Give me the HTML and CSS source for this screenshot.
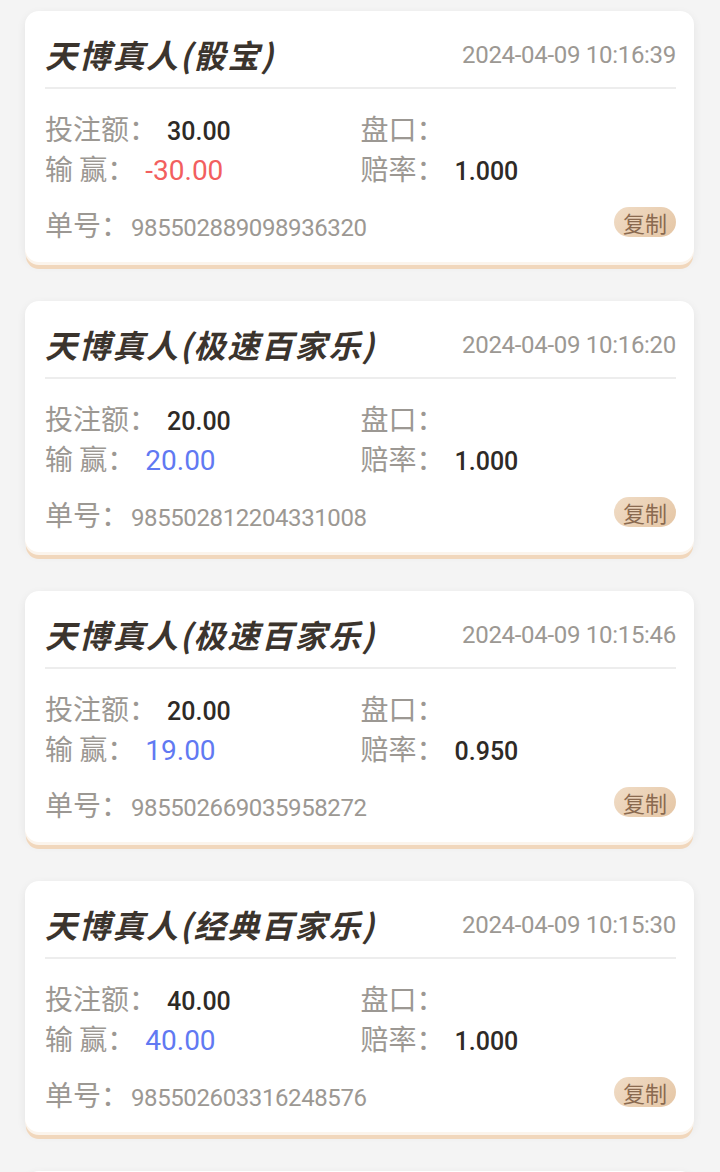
FILE: index.html
```html
<!DOCTYPE html>
<html lang="zh-CN">
<head>
    <meta charset="UTF-8">
    <meta name="viewport" content="width=device-width, initial-scale=1.0">
    <title>投注记录</title>
    <link rel="stylesheet" href="styles.css">
</head>
<body>
    <div class="lista">

        <div class="card">
            <div class="head">
                <p class="titulo">天博真人(骰宝)</p>
                <p class="fecha">2024-04-09 10:16:39</p>
            </div>
            <div class="datos">
                <p><span class="label">投注额：</span><span class="valor">30.00</span></p>
                <p><span class="label">盘口：</span></p>
                <p><span class="label">输 赢：</span><span class="gana rojo">-30.00</span></p>
                <p><span class="label">赔率：</span><span class="valor">1.000</span></p>
            </div>
            <div class="pie">
                <p><span class="label">单号：</span><span class="numero">985502889098936320</span></p>
                <button class="copiar">复制</button>
            </div>
        </div>

        <div class="card">
            <div class="head">
                <p class="titulo">天博真人(极速百家乐)</p>
                <p class="fecha">2024-04-09 10:16:20</p>
            </div>
            <div class="datos">
                <p><span class="label">投注额：</span><span class="valor">20.00</span></p>
                <p><span class="label">盘口：</span></p>
                <p><span class="label">输 赢：</span><span class="gana azul">20.00</span></p>
                <p><span class="label">赔率：</span><span class="valor">1.000</span></p>
            </div>
            <div class="pie">
                <p><span class="label">单号：</span><span class="numero">985502812204331008</span></p>
                <button class="copiar">复制</button>
            </div>
        </div>

        <div class="card">
            <div class="head">
                <p class="titulo">天博真人(极速百家乐)</p>
                <p class="fecha">2024-04-09 10:15:46</p>
            </div>
            <div class="datos">
                <p><span class="label">投注额：</span><span class="valor">20.00</span></p>
                <p><span class="label">盘口：</span></p>
                <p><span class="label">输 赢：</span><span class="gana azul">19.00</span></p>
                <p><span class="label">赔率：</span><span class="valor">0.950</span></p>
            </div>
            <div class="pie">
                <p><span class="label">单号：</span><span class="numero">985502669035958272</span></p>
                <button class="copiar">复制</button>
            </div>
        </div>

        <div class="card">
            <div class="head">
                <p class="titulo">天博真人(经典百家乐)</p>
                <p class="fecha">2024-04-09 10:15:30</p>
            </div>
            <div class="datos">
                <p><span class="label">投注额：</span><span class="valor">40.00</span></p>
                <p><span class="label">盘口：</span></p>
                <p><span class="label">输 赢：</span><span class="gana azul">40.00</span></p>
                <p><span class="label">赔率：</span><span class="valor">1.000</span></p>
            </div>
            <div class="pie">
                <p><span class="label">单号：</span><span class="numero">985502603316248576</span></p>
                <button class="copiar">复制</button>
            </div>
        </div>

        <!-- siguiente tarjeta, solo asoma el borde -->
        <div class="card vacia"></div>

    </div>
</body>
</html>
```

FILE: styles.css
```css
body {
    margin: 0;
    background: #f4f4f4;
    font-family: "Noto Sans CJK SC", sans-serif;
    color: #9c9893;
}
p { margin: 0; }

.lista { padding: 11px 26px 0 25px; }

.card {
    background: #fff;
    border-radius: 14px;
    padding: 0 18px 21px 20px;
    margin-bottom: 39px;
    box-shadow: 0 3px 0 #fbf4ec, 0 8px 0 -1px #f1d7bc, 0 3px 10px rgba(0, 0, 0, 0.07);
}
.vacia { height: 230px; }

/* cabecera: juego + fecha */
.head {
    display: flex;
    align-items: center;
    justify-content: space-between;
    height: 66px;
    padding-top: 10px;
    border-bottom: 2px solid #ededed;
}
.titulo {
    font-size: 32px;
    font-weight: bold;
    font-style: italic;
    letter-spacing: 1.7px;
    color: #3b342d;
}
.fecha {
    font-family: Roboto, sans-serif;
    font-size: 24px;
    letter-spacing: -0.3px;
    margin-top: 2px;
}

.datos {
    display: grid;
    grid-template-columns: 1fr 1fr;
    margin-top: 19px;
}
.datos p {
    height: 40px;
    line-height: 40px;
    white-space: nowrap;
}
.label { font-size: 28px; }
.valor {
    margin-left: 10px;
    font-family: Roboto, sans-serif;
    font-size: 25px;
    font-weight: 500;
    color: #2e2a26;
}
.gana {
    margin-left: 10px;
    font-family: Roboto, sans-serif;
    font-size: 28px;
}
.rojo { color: #f25f5f; }
.azul { color: #6179f2; }

.pie {
    display: flex;
    align-items: flex-start;
    justify-content: space-between;
    margin-top: 19px;
}
.pie p {
    height: 34px;
    line-height: 34px;
}
.numero {
    margin-left: 2px;
    font-family: Roboto, sans-serif;
    font-size: 24px;
    letter-spacing: -0.4px;
}
.copiar {
    width: 62px;
    height: 30px;
    padding: 0;
    border: none;
    border-radius: 15px;
    background: linear-gradient(135deg, #f0dcc6, #e5c6a5);
    color: #8a6a50;
    font-family: "Noto Sans CJK SC", sans-serif;
    font-size: 22px;
    line-height: 30px;
}
```
